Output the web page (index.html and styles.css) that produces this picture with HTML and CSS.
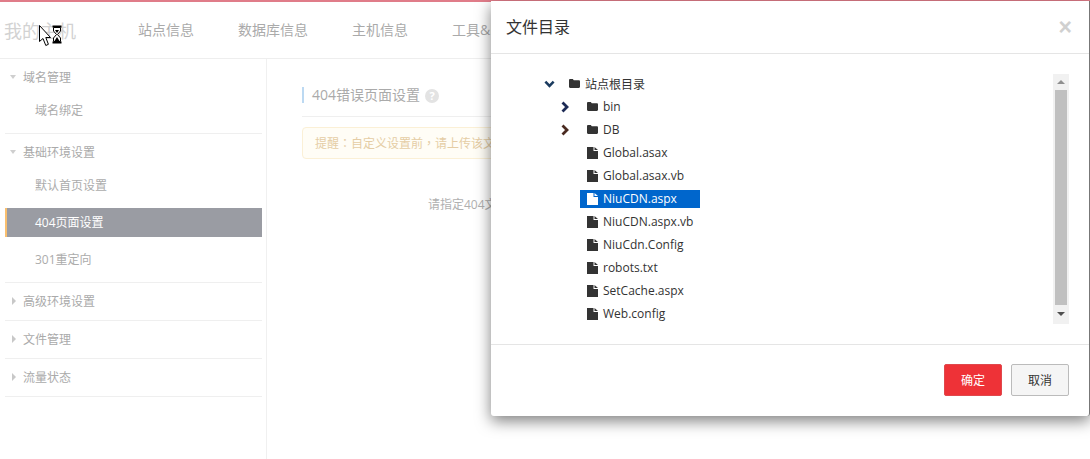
FILE: index.html
```html
<!DOCTYPE html>
<html lang="zh-CN">
<head>
<meta charset="utf-8">
<title>文件目录</title>
<link rel="stylesheet" href="styles.css">
</head>
<body>
<svg class="defs" width="0" height="0" aria-hidden="true">
  <symbol id="folder" viewBox="0 0 11 9"><path d="M0 1.200C0 .5.5 0 1.200 0h2.600l1 1.300h5c.7 0 1.200.5 1.200 1.200v5.300c0 .7-.5 1.200-1.200 1.200H1.200C.5 9 0 8.500 0 7.800z" fill="currentColor"/></symbol>
  <symbol id="file" viewBox="0 0 11 12"><path d="M0 0h6.500v4H11v8H0zM7.500 0 11 3H7.500z" fill="currentColor"/></symbol>
  <symbol id="chev-r" viewBox="0 0 8 12"><path d="M1.500 1.500 6 6l-4.500 4.500" fill="none" stroke="currentColor" stroke-width="2.800"/></symbol>
  <symbol id="chev-d" viewBox="0 0 12 8"><path d="M1.500 1.500 6 6l4.500-4.500" fill="none" stroke="currentColor" stroke-width="2.800"/></symbol>
</svg>

<div class="topbar"></div>
<header class="header">
  <div class="logo">我的主机</div>
  <nav class="nav">
    <a>站点信息</a>
    <a>数据库信息</a>
    <a>主机信息</a>
    <a>工具&amp;L</a>
  </nav>
</header>

<div class="layout">
  <aside class="sidebar">
    <section class="group">
      <h3 class="group-title open">域名管理</h3>
      <a class="item">域名绑定</a>
    </section>
    <section class="group">
      <h3 class="group-title open">基础环境设置</h3>
      <a class="item">默认首页设置</a>
      <a class="item active">404页面设置</a>
      <a class="item">301重定向</a>
    </section>
    <section class="group closed"><h3 class="group-title">高级环境设置</h3></section>
    <section class="group closed"><h3 class="group-title">文件管理</h3></section>
    <section class="group closed"><h3 class="group-title">流量状态</h3></section>
  </aside>
  <main class="main">
    <div class="section-head">
      <h2 class="section-title">404错误页面设置</h2>
      <span class="help">?</span>
    </div>
    <div class="alert" lang="zh-Hant">提醒：自定义设置前，请上传该文</div>
    <p class="hint">请指定404文</p>
  </main>
</div>

<div class="modal">
  <div class="modal-head">
    <h4 class="modal-title">文件目录</h4>
    <span class="close">×</span>
  </div>
  <div class="modal-body">
    <ul class="tree">
      <li class="node root"><svg class="chev down"><use href="#chev-d"/></svg><span class="entry"><svg class="ico folder"><use href="#folder"/></svg>站点根目录</span></li>
      <li class="node"><svg class="chev navy"><use href="#chev-r"/></svg><span class="entry"><svg class="ico folder"><use href="#folder"/></svg>bin</span></li>
      <li class="node"><svg class="chev brown"><use href="#chev-r"/></svg><span class="entry"><svg class="ico folder"><use href="#folder"/></svg>DB</span></li>
      <li class="node leaf"><span class="entry"><svg class="ico"><use href="#file"/></svg>Global.asax</span></li>
      <li class="node leaf"><span class="entry"><svg class="ico"><use href="#file"/></svg>Global.asax.vb</span></li>
      <li class="node leaf"><span class="entry selected"><svg class="ico"><use href="#file"/></svg>NiuCDN.aspx</span></li>
      <li class="node leaf"><span class="entry"><svg class="ico"><use href="#file"/></svg>NiuCDN.aspx.vb</span></li>
      <li class="node leaf"><span class="entry"><svg class="ico"><use href="#file"/></svg>NiuCdn.Config</span></li>
      <li class="node leaf"><span class="entry"><svg class="ico"><use href="#file"/></svg>robots.txt</span></li>
      <li class="node leaf"><span class="entry"><svg class="ico"><use href="#file"/></svg>SetCache.aspx</span></li>
      <li class="node leaf"><span class="entry"><svg class="ico"><use href="#file"/></svg>Web.config</span></li>
    </ul>
    <div class="scrollbar">
      <span class="arrow up"></span>
      <span class="thumb"></span>
      <span class="arrow dn"></span>
    </div>
  </div>
  <div class="modal-foot">
    <button class="btn primary">确定</button>
    <button class="btn">取消</button>
  </div>
</div>

<svg class="cursor" width="24" height="24" viewBox="0 0 24 24" aria-hidden="true">
  <path d="M.5.500V16.500L4 13.500l2.800 7 2.600-1.200L6.800 12.500h4.700z" fill="#fff" stroke="#000"/>
  <path d="M13.500 1.500h9M13.500 17.500h9" stroke="#000" stroke-width="2" fill="none"/>
  <path d="M14.500 2.500v3.500l3 3.500-3 3.500v3.500h7v-3.500l-3-3.500 3-3.500V2.500z" fill="#fff" stroke="#000"/>
  <path d="M16 5h4l-2 3zM15.500 16l2.500-4 2.500 4z" fill="#000"/>
</svg>
</body>
</html>
```

FILE: styles.css
```css
* { box-sizing: border-box; }
html, body { margin: 0; height: 100%; }
body {
  width: 1090px;
  height: 459px;
  overflow: hidden;
  position: relative;
  background: #fff;
  font-family: "Open Sans", "Noto Sans CJK SC", sans-serif;
  font-size: 12px;
  color: #aaa;
}
.defs { position: absolute; }
h2, h3, h4, p, ul { margin: 0; padding: 0; font-weight: 400; }
ul { list-style: none; }

.topbar { height: 2px; background: #e07c89; }
.header {
  height: 57px;
  display: flex;
  align-items: center;
  border-bottom: 1px solid #eeeeee;
  padding: 0 0 1px 4px;
}
.logo { width: 134px; font-size: 18px; color: #d2d2d2; }
.nav { display: flex; gap: 44px; font-size: 14px; color: #aaaaaa; white-space: nowrap; margin-bottom: 2px; }

.layout { display: flex; height: 400px; }
.sidebar {
  width: 267px;
  border-right: 1px solid #f0f0f0;
  padding: 0 4px 0 5px;
  flex: none;
}
.group { border-bottom: 1px solid #efefef; padding-bottom: 4px; }
.group.closed { padding-bottom: 0; height: 38px; }
.group-title {
  position: relative;
  height: 38px;
  line-height: 37px;
  padding-left: 18px;
  font-size: 12px;
  color: #aaaaaa;
}
.group-title.open { height: 35px; }
.group-title::before {
  content: "";
  position: absolute;
  left: 5px;
  top: 16px;
  border-style: solid;
  border-width: 4px 3.500px 0 3.500px;
  border-color: #cfcfcf transparent transparent;
}
.closed .group-title::before {
  left: 7px;
  top: 14px;
  border-width: 4px 0 4px 4px;
  border-color: transparent transparent transparent #c8c8c8;
}
.item {
  display: block;
  height: 35px;
  line-height: 34px;
  padding-left: 30px;
  color: #acacac;
}
.item.active {
  height: 29px;
  line-height: 29px;
  margin: 4px 0;
  background: #9a9ca3;
  border-left: 2px solid #f9bf6f;
  padding-left: 28px;
  color: #fff;
}
.item.active + .item { height: 37px; line-height: 38px; }

.main { flex: 1; padding: 28px 0 0 35px; min-width: 0; overflow: hidden; }
.section-head {
  display: flex;
  align-items: center;
  height: 30px;
  border-bottom: 1px solid #efefef;
  padding-bottom: 13px;
}
.section-title {
  border-left: 2px solid #bcd9f2;
  padding-left: 8px;
  font-size: 14px;
  line-height: 16px;
  color: #aaaaaa;
  margin-right: 5px;
}
.help {
  width: 14px;
  height: 14px;
  margin-top: 2px;
  border-radius: 50%;
  background: #e3e3e3;
  color: #fff;
  font-size: 11px;
  font-weight: 700;
  line-height: 14px;
  text-align: center;
}
.alert {
  margin-top: 10px;
  height: 32px;
  line-height: 30px;
  width: 400px;
  padding-left: 12px;
  background: #fffdf6;
  border: 1px solid #fbf0d6;
  border-radius: 4px;
  color: #e5cda5;
  white-space: nowrap;
  font-family: "Noto Sans CJK TC", sans-serif;
}
.hint { margin: 36px 0 0 126px; color: #b0b0b0; white-space: nowrap; }

.modal {
  position: absolute;
  left: 491px;
  top: 1px;
  width: 599px;
  height: 415px;
  background: #fff;
  border-right: 1px solid #777;
  border-radius: 0 0 3px 3px;
  box-shadow: 0 5px 15px rgba(0, 0, 0, .5);
  display: flex;
  flex-direction: column;
  color: #333;
}
.modal-head {
  height: 53px;
  flex: none;
  display: flex;
  align-items: center;
  justify-content: space-between;
  padding: 0 17px 0 15px;
  border-bottom: 1px solid #e5e5e5;
}
.modal-title { font-size: 16px; color: #333; margin-bottom: 2px; }
.close { font-size: 23px; font-weight: 700; color: #d0d0d0; line-height: 1; font-family: "Liberation Sans", sans-serif; }
.modal-body {
  height: 291px;
  flex: none;
  display: flex;
  padding: 20px 20px 20px 0;
  border-bottom: 1px solid #e5e5e5;
}
.tree { flex: 1; margin-top: -2px; padding-left: 53px; }
.node { height: 23px; display: flex; align-items: center; color: #333; white-space: nowrap; padding-left: 17px; }
.node.root { padding-left: 0; }
.node.leaf { padding-left: 43px; }
.chev { flex: none; }
.chev.down { width: 11px; height: 8px; color: #1b3b5f; margin-right: 14px; }
.chev.navy, .chev.brown { width: 8px; height: 12px; margin-right: 18px; }
.chev.navy { color: #1c2a55; }
.chev.brown { color: #4a2a20; }
.entry { display: inline-flex; align-items: center; height: 18px; gap: 5px; }
.ico { width: 11px; height: 12px; flex: none; color: #333; }
.ico.folder { height: 9px; }
.selected {
  width: 120px;
  margin-left: -7px;
  padding-left: 7px;
  background: #0066cc;
  color: #fff;
}
.selected .ico { color: #fff; }

.scrollbar {
  width: 16px;
  flex: none;
  height: 250px;
  background: #f1f1f1;
  display: flex;
  flex-direction: column;
  align-items: center;
}
.thumb { width: 12px; height: 215px; background: #c0c0c0; }
.arrow { height: 16px; width: 16px; position: relative; flex: none; }
.arrow::before {
  content: "";
  position: absolute;
  left: 4px;
  border-style: solid;
  border-color: transparent;
}
.arrow.up::before { top: 6px; border-width: 0 4px 4px; border-bottom-color: #8f8f8f; }
.arrow.dn { height: 19px; }
.arrow.dn::before { top: 7px; border-width: 4px 4px 0; border-top-color: #505050; }

.modal-foot {
  flex: 1;
  display: flex;
  justify-content: flex-end;
  align-items: flex-start;
  gap: 9px;
  padding: 19px 20px 0 0;
}
.btn {
  width: 58px;
  height: 32px;
  padding: 0;
  border: 1px solid #bbb;
  border-radius: 2px;
  background: #f5f5f5;
  color: #333;
  font: inherit;
}
.btn.primary { background: #ee3237; border-color: #e0484c; color: #fff; }

.cursor { position: absolute; left: 39px; top: 25px; }
```
